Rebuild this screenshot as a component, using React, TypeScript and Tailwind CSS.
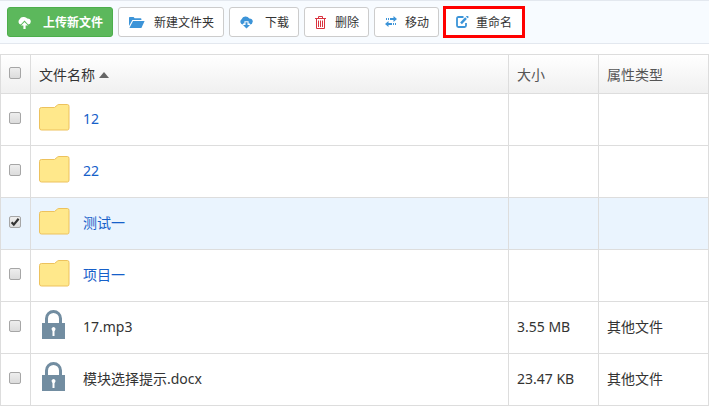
import { useState, type ReactNode } from "react";

const FOLDER_PATH = "M.5 9.5Q.5 7.5 2.5 7.5H15.5L18.5 5Q19 4.5 20 4.5H28.5Q30 4.5 30 6.5V28Q30 30 28.5 30H2.5Q.5 30 .5 28Z";

function CloudUpIcon() {
  return (
    <svg width="13" height="13" viewBox="0 0 13 13" className="shrink-0 fill-white">
      <path d="M3 8.6A3 3 0 0 1 1.6 3.3A4 4 0 0 1 5.6 1Q8 .8 9.3 2.6Q12.7 2.6 12.8 5.8Q12.6 8.2 10.2 8.6L6.5 4.6L2.8 8.6Z" />
      <path d="M6.5 6L10 9.6H7.6V12.9H5.4V9.6H3Z" />
    </svg>
  );
}

function CloudDownIcon() {
  return (
    <svg width="13" height="13" viewBox="0 0 13 13" className="shrink-0 fill-[#3c94d8]">
      <path d="M3 8.6A3 3 0 0 1 1.6 3.2A4 4 0 0 1 5.6.6Q8 .6 9.3 2.4Q12.6 2.4 12.8 5.4Q12.6 8 10 8.6V7.5H8.6V5.2H4.4V7.5H3Z" />
      <path d="M5.5 6.2H7.5V9H10L6.5 12.6L3 9H5.5Z" />
    </svg>
  );
}

function OpenFolderIcon() {
  return (
    <svg width="16" height="11" viewBox="0 0 16 11" className="shrink-0 fill-[#3c94d8]">
      <path d="M0 9V.8Q0 0 .8 0H4.6L5.6 1.2H11.6Q12.4 1.2 12.4 2V3H3.4Z" />
      <path d="M4 4H15.6L12.4 11H.4Z" />
    </svg>
  );
}

function TrashIcon() {
  return (
    <svg width="11" height="13" viewBox="0 0 11 13" className="shrink-0 fill-none stroke-[#d9333f]">
      <path d="M0 2.5H11M3.5 2.5V.5H7.5V2.5M1.5 3V12.5H9.5V3M3.5 4.5V11M5.5 4.5V11M7.5 4.5V11" />
    </svg>
  );
}

function MoveIcon() {
  return (
    <svg width="12" height="12" viewBox="0 0 12 12" className="shrink-0 fill-[#3c94d8]">
      <path d="M1 2H2V4H1ZM3 2H4V4H3ZM5 2H8.5V0L12 3L8.5 6V4H5Z" />
      <path d="M11 7H10V9H11ZM9 7H8V9H9ZM7 7H3.5V5L0 8L3.5 11V9H7Z" />
    </svg>
  );
}

function RenameIcon() {
  return (
    <svg width="13" height="12" viewBox="0 0 13 12" className="shrink-0 fill-none stroke-[#3c94d8]">
      <path d="M7.5 1H2.5Q1 1 1 2.5V9.5Q1 11 2.5 11H8.5Q10 11 10 9.5V7" strokeWidth="1.8" />
      <path d="M5 7.4L10 2.2" strokeWidth="2.4" />
      <path d="M10.8 1.4L12 .2" strokeWidth="2.4" />
    </svg>
  );
}

function FolderIcon() {
  return (
    <svg width="32" height="38" viewBox="0 0 32 38" className="shrink-0 fill-[#ffe88b] stroke-[#edc25d]">
      <path d={FOLDER_PATH} />
    </svg>
  );
}

function LockIcon() {
  return (
    <svg width="32" height="38" viewBox="0 0 32 38" className="shrink-0">
      <path d="M7.5 16V10.5A7 7 0 0 1 21.5 10.5V16" className="fill-none stroke-[#728da1]" strokeWidth="3" />
      <path d="M3 15H26V31H3Z" className="fill-[#728da1]" />
      <path d="M12.5 21A2 2 0 1 1 16 22.4L15.5 23.2V28H13.5V23.2Z" className="fill-white" />
    </svg>
  );
}

type ToolButtonProps = { icon: ReactNode; label: string; slot: string; tone?: string };

function ToolButton({ icon, label, slot, tone }: ToolButtonProps) {
  return (
    <button
      type="button"
      className={`flex items-center pt-0.5 text-xs whitespace-nowrap ${tone ?? "h-[30px] rounded-[3px] border border-[#cccccc] bg-white pr-[9px] pl-[10px] text-[#333333]"}`}
    >
      <span className={`-mt-0.5 ${slot}`}>{icon}</span>
      {label}
    </button>
  );
}

function CheckBox({ label, checked, onChange }: { label: string; checked: boolean; onChange: () => void }) {
  return (
    <label className="relative -mt-0.5 ml-2 block size-3">
      <input
        type="checkbox"
        aria-label={label}
        checked={checked}
        onChange={onChange}
        className="block size-3 appearance-none rounded-[2px] border border-[#a6a6a6] bg-linear-to-b from-[#eeeeee] to-[#dcdcdc]"
      />
      {checked && (
        <svg viewBox="0 0 12 12" className="pointer-events-none absolute inset-0 size-3 fill-none stroke-[#333333]">
          <path d="M2.6 6.2L4.8 8.6L9.6 2.8" strokeWidth="2.2" />
        </svg>
      )}
    </label>
  );
}

type FileRow = { name: string; folder: boolean; size: string; kind: string };

const files: FileRow[] = [
  { name: "12", folder: true, size: "", kind: "" },
  { name: "22", folder: true, size: "", kind: "" },
  { name: "测试一", folder: true, size: "", kind: "" },
  { name: "项目一", folder: true, size: "", kind: "" },
  { name: "17.mp3", folder: false, size: "3.55 MB", kind: "其他文件" },
  { name: "模块选择提示.docx", folder: false, size: "23.47 KB", kind: "其他文件" },
];

export default function App() {
  const [selected, setSelected] = useState<string[]>(["测试一"]);
  const toggle = (name: string) =>
    setSelected((now) => (now.includes(name) ? now.filter((n) => n !== name) : [...now, name]));
  const all = selected.length === files.length;

  return (
    <div className="bg-white font-['Noto_Sans','Noto_Sans_CJK_SC',sans-serif] text-sm text-[#333333]">
      <div className="flex h-11 items-center gap-[5px] border-y border-[#e3e8ef] bg-[#f7fbff] pl-[7px]">
        <ToolButton
          icon={<CloudUpIcon />}
          label="上传新文件"
          slot="w-[25px]"
          tone="h-[30px] rounded-[3px] border border-[#4cae4c] bg-[#5cb85c] pr-[9px] pl-[10px] font-bold text-white"
        />
        <ToolButton icon={<OpenFolderIcon />} label="新建文件夹" slot="w-[25px]" />
        <ToolButton icon={<CloudDownIcon />} label="下载" slot="w-[25px]" />
        <ToolButton icon={<TrashIcon />} label="删除" slot="w-5" />
        <ToolButton icon={<MoveIcon />} label="移动" slot="w-5" />
        <ToolButton
          icon={<RenameIcon />}
          label="重命名"
          slot="w-5"
          tone="-ml-px h-8 border-3 border-[#ff0000] bg-white px-[10px] text-[#333333]"
        />
      </div>

      <table className="mt-[10px] w-full table-fixed border-separate border-spacing-0 border-t border-l border-[#dddddd]">
        <colgroup>
          <col className="w-[30px]" />
          <col />
          <col className="w-[90px]" />
          <col className="w-[110px]" />
        </colgroup>
        <thead>
          <tr className="h-[39px] text-left text-[#555555] *:border-r *:border-b *:border-[#dddddd] *:bg-linear-to-b *:from-white *:to-[#f0f0f0] *:font-normal">
            <th className="p-0">
              <CheckBox label="全选" checked={all} onChange={() => setSelected(all ? [] : files.map((f) => f.name))} />
            </th>
            <th className="p-0 pt-0.5 pl-2 text-[#333333]">
              <button type="button" className="flex items-center gap-1">
                文件名称
                <svg width="10" height="6" viewBox="0 0 10 6" className="fill-[#666666]">
                  <path d="M5 0L10 6H0Z" />
                </svg>
              </button>
            </th>
            <th className="p-0 pt-0.5 pl-2">大小</th>
            <th className="p-0 pt-0.5 pl-2">属性类型</th>
          </tr>
        </thead>
        <tbody>
          {files.map((file) => (
            <tr
              key={file.name}
              className={`h-[52px] *:border-r *:border-b *:border-[#dddddd] ${selected.includes(file.name) ? "bg-[#eaf4fe]" : "bg-white"}`}
            >
              <td className="p-0 pb-0.5">
                <CheckBox label={file.name} checked={selected.includes(file.name)} onChange={() => toggle(file.name)} />
              </td>
              <td className="p-0 pb-0.5 pl-2">
                <div className="flex items-center gap-3">
                  {file.folder ? <FolderIcon /> : <LockIcon />}
                  {file.folder ? (
                    <a href="#" className="text-[#1660c9]">
                      {file.name}
                    </a>
                  ) : (
                    <span>{file.name}</span>
                  )}
                </div>
              </td>
              <td className="p-0 pb-0.5 pl-2">{file.size}</td>
              <td className="p-0 pb-0.5 pl-2">{file.kind}</td>
            </tr>
          ))}
        </tbody>
      </table>
    </div>
  );
}
